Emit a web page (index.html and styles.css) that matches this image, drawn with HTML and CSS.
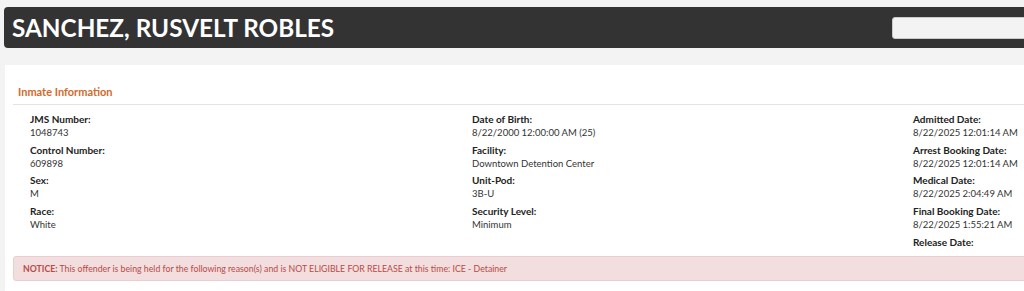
FILE: index.html
```html
<!DOCTYPE html>
<html lang="en">
<head>
    <meta charset="UTF-8">
    <title>Inmate Information</title>
    <link rel="stylesheet" href="styles.css">
</head>
<body>
    <div class="page">
        <div class="title-bar">
            <h1 class="title">SANCHEZ, RUSVELT ROBLES</h1>
            <input class="search" type="text">
        </div>

        <div class="panel">
            <div class="panel-heading">Inmate Information</div>
            <div class="panel-body">
                <div class="info-grid">
                    <div class="info-col">
                        <div class="field"><div class="label">JMS Number:</div><div class="value">1048743</div></div>
                        <div class="field"><div class="label">Control Number:</div><div class="value">609898</div></div>
                        <div class="field"><div class="label">Sex:</div><div class="value">M</div></div>
                        <div class="field"><div class="label">Race:</div><div class="value">White</div></div>
                    </div>
                    <div class="info-col">
                        <div class="field"><div class="label">Date of Birth:</div><div class="value">8/22/2000 12:00:00 AM (25)</div></div>
                        <div class="field"><div class="label">Facility:</div><div class="value">Downtown Detention Center</div></div>
                        <div class="field"><div class="label">Unit-Pod:</div><div class="value">3B-U</div></div>
                        <div class="field"><div class="label">Security Level:</div><div class="value">Minimum</div></div>
                    </div>
                    <div class="info-col">
                        <div class="field"><div class="label">Admitted Date:</div><div class="value">8/22/2025 12:01:14 AM</div></div>
                        <div class="field"><div class="label">Arrest Booking Date:</div><div class="value">8/22/2025 12:01:14 AM</div></div>
                        <div class="field"><div class="label">Medical Date:</div><div class="value">8/22/2025 2:04:49 AM</div></div>
                        <div class="field"><div class="label">Final Booking Date:</div><div class="value">8/22/2025 1:55:21 AM</div></div>
                        <div class="field"><div class="label">Release Date:</div><div class="value"></div></div>
                    </div>
                </div>

                <div class="notice">
                    <b>NOTICE:</b> This offender is being held for the following reason(s) and is NOT ELIGIBLE FOR RELEASE at this time: ICE - Detainer
                </div>
            </div>
        </div>
    </div>
</body>
</html>
```

FILE: styles.css
```css
* {
    margin: 0;
    padding: 0;
    box-sizing: border-box;
}

body {
    font-family: Lato, "Open Sans", sans-serif;
    background-color: #f3f3f3;
    color: #222;
    overflow: hidden;
}

.page {
    width: 1340px;
    padding: 7px 0 0 4px;
}

.title-bar {
    display: flex;
    align-items: center;
    justify-content: space-between;
    height: 41px;
    background: #333333;
    border-radius: 4px;
    padding: 0 8px;
}

.title {
    color: #ffffff;
    font-size: 24.3px;
    font-weight: bold;
}

.search {
    width: 440px;
    height: 22px;
    background: #f3f3f3;
    border: 1px solid #cccccc;
    border-radius: 3px;
}

.panel {
    margin-top: 17px;
    margin-left: 1px;
    background: #ffffff;
    padding: 0 8px;
    min-height: 300px;
}

.panel-heading {
    color: #d4692b;
    font-size: 11px;
    line-height: 13px;
    font-weight: bold;
    padding: 20px 5px 6px;
    border-bottom: 1px solid #e3e3e3;
}

.panel-body {
    padding-top: 7px;
}

.info-grid {
    display: grid;
    grid-template-columns: 442px 441px 441px;
    padding-left: 17px;
}

.field {
    line-height: 14px;
    margin-bottom: 2.67px;
}

.label {
    font-size: 10px;
    font-weight: bold;
}

.value {
    font-size: 9.5px;
    color: #333;
}

.notice {
    margin-top: 4.7px;
    background: #f2dede;
    border: 1px solid #ebccd1;
    border-radius: 3px;
    color: #b94a48;
    font-size: 8.75px;
    line-height: 11px;
    padding: 6px 9px;
}
```
